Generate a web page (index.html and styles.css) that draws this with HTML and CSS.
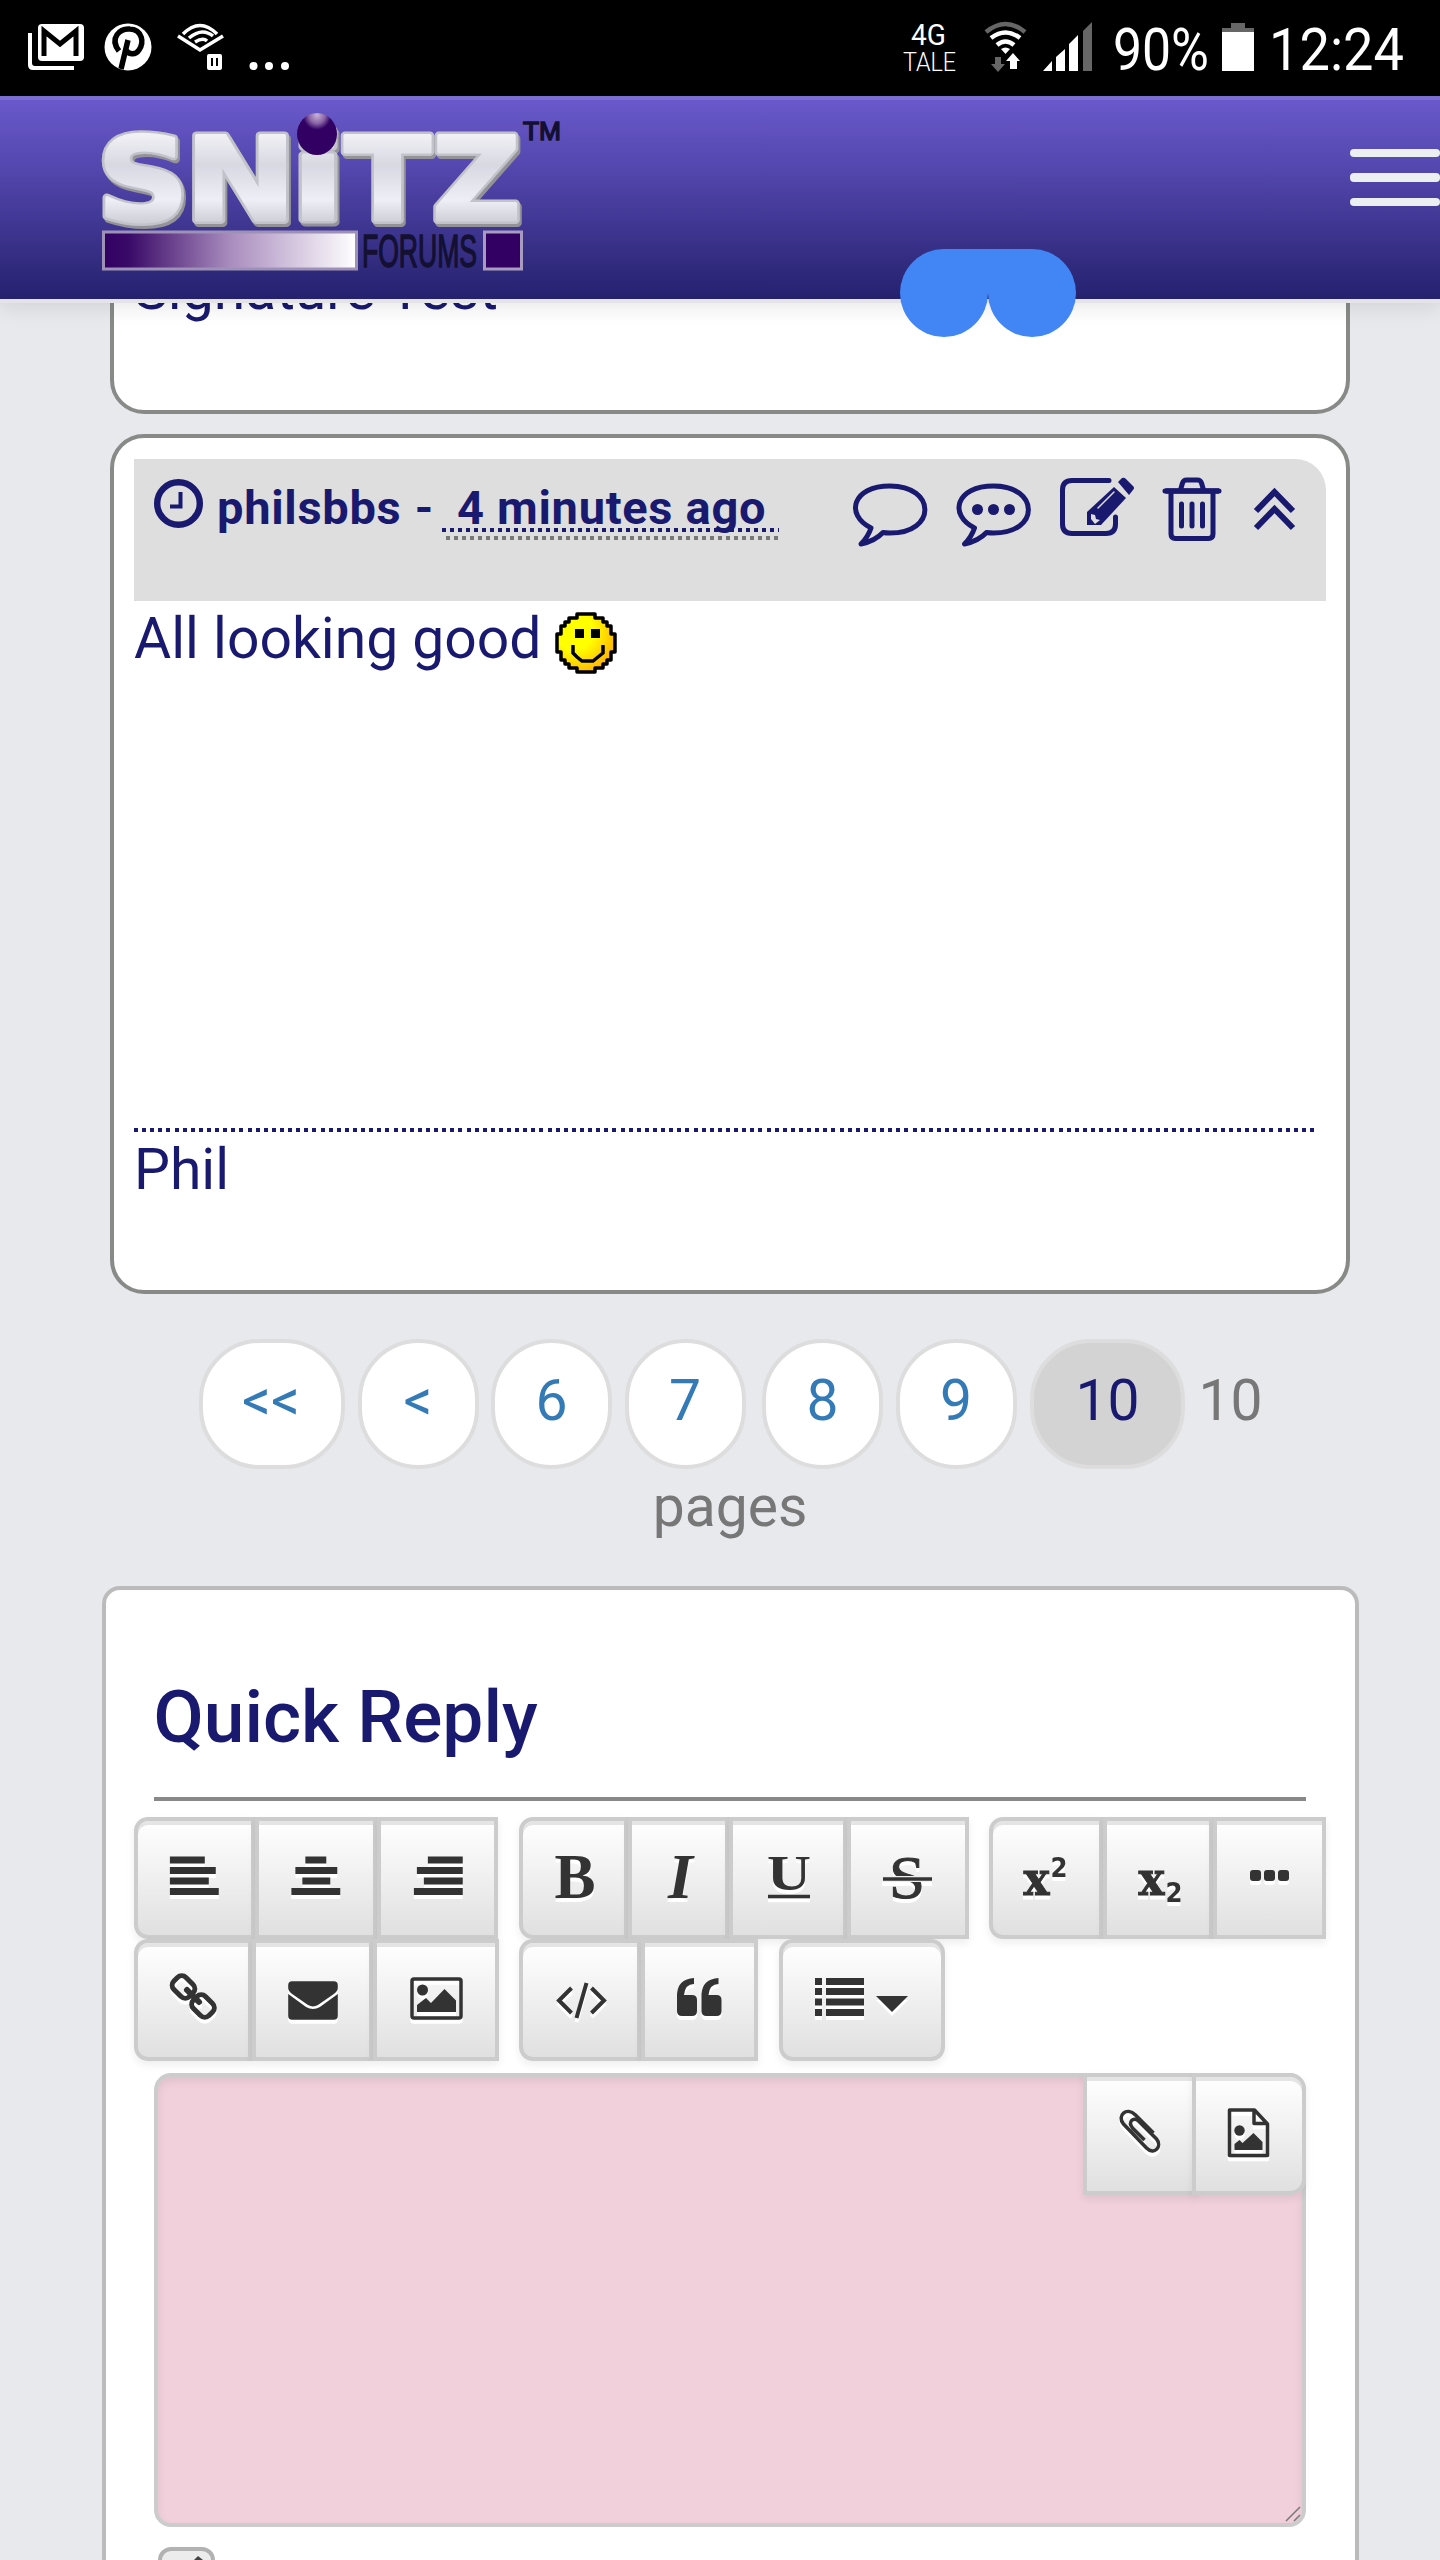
FILE: index.html
```html
<!DOCTYPE html>
<html lang="en">
<head>
<meta charset="utf-8">
<title>Snitz Forums</title>
<link rel="stylesheet" href="styles.css">
</head>
<body>
<div class="status">
  <svg width="1440" height="96" viewBox="0 0 1440 96">
    <g fill="#fff">
      <path d="M28 33h4v30q0 3 3 3h39v4H33q-5 0-5-5z"/>
      <rect x="38" y="24" width="46" height="37" rx="4"/>
      <path d="M44 56V31l16 13 16-13v25" fill="none" stroke="#000" stroke-width="5"/>
      <circle cx="128" cy="47" r="23.500"/>
      <path d="M121 69l7-29M119 51c-10-13 1-23 11-22 13 1 14 14 9 21-4 6-11 4-13 0" fill="none" stroke="#000" stroke-width="5.500"/>
      <g fill="none" stroke="#fff" stroke-width="3.500"><path d="M178 36l22 14 23-14M183 34q17-17 34 0M189 38q13-11 24-2M195 42q8-5 12-1"/></g>
      <rect x="207" y="54" width="15" height="16" rx="2"/>
      <path d="M212 58v8M217 58v8" stroke="#000" stroke-width="2"/>
      <circle cx="253.500" cy="66" r="4"/><circle cx="269" cy="66" r="4"/><circle cx="285" cy="66" r="4"/>
      <text x="911" y="44.500" font-size="29" textLength="35" lengthAdjust="spacingAndGlyphs">4G</text>
      <text x="903" y="71" font-size="26" font-weight="300" textLength="53" lengthAdjust="spacingAndGlyphs">TALE</text>
      <g fill="none" stroke="#fff" stroke-width="4.500">
        <path d="M986 32q19.500-16 39 0" stroke="#666"/>
        <path d="M991 38q14.500-11 29 0M997 45q8.500-7 17 0"/>
      </g>
      <path d="M1001 49q4.500-3 9 0l-4.500 5z"/>
      <path d="M995 57h6v7h4l-7 8-7-8h4z" fill="#666"/>
      <path d="M1010 69h7v-8h3l-7-8-7 8h4z"/>
      <path d="M1043 71l9-10v10zM1056 57l9-8v22h-9zM1069 44l9-9v36h-9z"/>
      <path d="M1083 31l9-9v49h-9z" fill="#666"/>
      <text x="1113" y="69.500" font-size="60" textLength="96" lengthAdjust="spacingAndGlyphs">90%</text>
      <path d="M1231 23h14v5h9v5h-32v-5h9z" fill="#666"/>
      <rect x="1222" y="32" width="32" height="39"/>
      <text x="1269" y="69.500" font-size="60" textLength="135" lengthAdjust="spacingAndGlyphs">12:24</text>
    </g>
  </svg>
</div>
<header class="navbar">
  <svg class="logo" width="470" height="176" viewBox="96 104 470 176">
    <defs>
      <linearGradient id="metal" x1="0" y1="130" x2="0" y2="230" gradientUnits="userSpaceOnUse"><stop offset="0" stop-color="#f4f4f8"/><stop offset=".35" stop-color="#d8d8e2"/><stop offset=".7" stop-color="#eeeef6"/><stop offset="1" stop-color="#c4c4cc"/></linearGradient>
      <linearGradient id="fade"><stop offset="0" stop-color="#310062"/><stop offset=".1" stop-color="#3a0a68"/><stop offset=".5" stop-color="#a98cbe"/><stop offset="1" stop-color="#fff"/></linearGradient>
      <radialGradient id="ball" cx=".5" cy=".05" r=".5"><stop offset="0" stop-color="#c9b2d6"/><stop offset=".4" stop-color="#8a64a6"/><stop offset=".7" stop-color="#310062"/></radialGradient>
      <g id="word" class="logo-word">
        <text x="98" y="220" font-size="115" textLength="92" lengthAdjust="spacingAndGlyphs">S</text>
        <text x="185.500" y="220" font-size="115" textLength="112" lengthAdjust="spacingAndGlyphs">N</text>
        <text x="291.500" y="220" font-size="117" textLength="55" lengthAdjust="spacingAndGlyphs">i</text>
        <text x="345.500" y="220" font-size="115" textLength="86" lengthAdjust="spacingAndGlyphs">T</text>
        <text x="433" y="220" font-size="115" textLength="89" lengthAdjust="spacingAndGlyphs">Z</text>
      </g>
    </defs>
    <use href="#word" x="1" y="3" fill="#939397" stroke="#939397" stroke-width="8"/>
    <use href="#word" x="-1" y="0" fill="#bcbcc6" stroke="#c2c2ca" stroke-width="8"/>
    <use href="#word" x="-1" y="0" fill="url(#metal)" stroke="url(#metal)" stroke-width="3"/>
    <ellipse cx="317" cy="134" rx="20" ry="21" fill="url(#ball)"/>
    <text x="523" y="140" class="logo-small" font-size="26" textLength="38" lengthAdjust="spacingAndGlyphs">TM</text>
    <rect x="103.500" y="232" width="253" height="37" fill="url(#fade)" stroke="#9d92b5" stroke-width="3"/>
    <text x="362" y="267" class="logo-small" font-size="46" textLength="115" lengthAdjust="spacingAndGlyphs">FORUMS</text>
    <rect x="484.500" y="232" width="37" height="37" fill="#310062" stroke="#a79cc0" stroke-width="3"/>
  </svg>
  <div class="burger"><i></i><i></i><i></i></div>
  <div class="handles"><i></i><i></i></div>
</header>
<main class="page">
  <section class="card card-prev"><div class="sig-prev">Signature Test</div></section>
  <section class="card card-post">
    <div class="post-head">
      <svg width="49" height="49" viewBox="0 0 49 49"><circle cx="24.500" cy="24.500" r="21.300" fill="none" stroke="#191970" stroke-width="6.400"/><path d="M26.500 13v14.500H16" fill="none" stroke="#191970" stroke-width="4"/></svg>
      <span class="author">philsbbs -</span>
      <span class="ago">4 minutes ago</span>
      <svg class="actions" width="452" height="80" viewBox="848 469 452 80" fill="none" stroke="#191970" stroke-width="5" stroke-linejoin="round" stroke-linecap="round">
        <path id="bubble" d="M871 528C845 515 852 486 890 486C936 486 937 533 890 533Q886 533 883 532.500Q875 541 861 544Q868 537 871 528z"/>
        <use href="#bubble" x="103.500"/>
        <g fill="#191970" stroke="none"><circle cx="977.500" cy="509.500" r="5.500"/><circle cx="993.500" cy="509.500" r="5.500"/><circle cx="1009.500" cy="509.500" r="5.500"/></g>
        <path d="M1109 480.500h-37q-9.500 0-9.500 9.500v34q0 9.500 9.500 9.500h34q9.500 0 9.500-9.500v-7"/>
        <path d="M1114 487l12 11-25 27h-14v-13z" fill="#191970" stroke="none"/>
        <path d="M1118 482l4-4q2-1 4 1l7 7q2 2 0 4l-4 5z" fill="#191970" stroke="none"/>
        <path d="M1098 508l16-16" stroke="#dedede" stroke-width="1.500"/>
        <path d="M1091 514l4 1 1 4 4 1-5 4-4-5z" fill="#dedede" stroke="none"/>
        <path d="M1165.500 491h53.500" stroke-width="5.500" stroke-linecap="butt"/>
        <path d="M1165 491h54M1171 491v43q0 4.500 4.500 4.500h33q4.500 0 4.500-4.500v-43M1180.500 490l2-7q1-3 4-3h11q3 0 4 3l2 7"/>
        <path d="M1181.500 504v22M1192 504v22M1202.500 504v22"/>
        <path d="M1256 511l18.500-19L1293 511M1256 528l18.500-19L1293 528" stroke-linecap="butt" stroke-linejoin="miter" stroke-width="6"/>
      </svg>
    </div>
    <div class="post-body">All looking good <svg class="smiley" width="62" height="62" viewBox="0 0 62 62"><defs><radialGradient id="sun" cx=".3" cy=".3" r=".8"><stop offset=".4" stop-color="#ff0"/><stop offset="1" stop-color="#ffae00"/></radialGradient></defs><path d="M22 2h18v4h8v4h4v4h4v8h4v18h-4v8h-4v4h-4v4h-8v4H22v-4h-8v-4h-4v-4H6v-8H2V22h4v-8h4v-4h4V6h8z" fill="url(#sun)" stroke="#000" stroke-width="3.500" stroke-linejoin="round"/><path d="M20 17h9v9h-9zM36 17h9v9h-9z"/><path d="M18 33v8l4 4 5 4h11l5-4 5-4v-8" fill="none" stroke="#000" stroke-width="3.500"/></svg></div>
    <div class="dots"></div>
    <div class="post-sig">Phil</div>
  </section>
  <nav class="pager">
    <a class="wide">&lt;&lt;</a><a>&lt;</a><a>6</a><a>7</a><a class="eight">8</a><a>9</a><a class="current">10</a><span>10</span>
  </nav>
  <div class="pages">pages</div>
  <section class="panel">
    <h2>Quick Reply</h2>
    <div class="rule"></div>
    <div class="toolbar">
      <div class="group g365">
        <button><svg viewBox="134 1817 122 122"><g class="bars"><path d="M170 1860h35M170 1870.500h46M170 1881h39M170 1891.500h49"/></g></svg></button>
        <button><svg viewBox="255.500 1817 122 122"><g class="bars"><path d="M306 1860h21M296 1870.500h42M303 1881h28M292 1891.500h49"/></g></svg></button>
        <button><svg viewBox="377 1817 122 122"><g class="bars"><path d="M428 1860h35M417 1870.500h46M424 1881h39M414 1891.500h49"/></g></svg></button>
      </div>
      <div class="group g449">
        <button class="w109"><svg viewBox="519.500 1817 109 122"><text class="serif" x="555" y="1898" font-size="64" font-weight="700" textLength="41" lengthAdjust="spacingAndGlyphs">B</text></svg></button>
        <button class="w101"><svg viewBox="628 1817 101 122"><text class="serif" x="668" y="1898" font-size="64" font-weight="700" font-style="italic">I</text></svg></button>
        <button class="w118"><svg viewBox="729 1817 118 122"><text class="serif" x="767" y="1890" font-size="51" font-weight="700" textLength="44" lengthAdjust="spacingAndGlyphs">U</text><path class="line" d="M768 1896.500h42"/></svg></button>
        <button class="w122"><svg viewBox="847 1817 122 122"><text class="serif strike" x="889" y="1898" font-size="62" textLength="36" lengthAdjust="spacingAndGlyphs">S</text><path d="M882 1876h50v6h-50z" fill="#eee"/><path class="line" d="M883 1879h49"/></svg></button>
      </div>
      <div class="group g337">
        <button class="w114"><svg viewBox="989.500 1817 114 122"><text class="slab" x="1024" y="1895" font-size="47" textLength="26" lengthAdjust="spacingAndGlyphs">x</text><text class="bold" x="1051" y="1877" font-size="27" textLength="17" lengthAdjust="spacingAndGlyphs">2</text></svg></button>
        <button class="w110"><svg viewBox="1103.500 1817 110 122"><text class="slab" x="1139" y="1895" font-size="47" textLength="26" lengthAdjust="spacingAndGlyphs">x</text><text class="bold" x="1166" y="1902" font-size="27" textLength="17" lengthAdjust="spacingAndGlyphs">2</text></svg></button>
        <button class="w113"><svg viewBox="1213 1817 113 122"><rect x="1250" y="1870" width="11" height="11" rx="3"/><rect x="1264" y="1870" width="11" height="11" rx="3"/><rect x="1278" y="1870" width="11" height="11" rx="3"/></svg></button>
      </div>
      <div class="group g365">
        <button class="w118"><svg viewBox="134 1939 118 122"><g fill="none" stroke="#333" stroke-width="5"><rect x="-11" y="-8.500" width="22" height="17" rx="6" transform="translate(183.500 1987) rotate(45)"/><rect x="-11" y="-8.500" width="22" height="17" rx="6" transform="translate(203 2006) rotate(45)"/><path d="M187 1990l12 12" stroke-linecap="round" stroke-width="6"/></g></svg></button>
        <button class="w121"><svg viewBox="251.500 1939 122 122"><path d="M288 1985q0-4 4-4h42q4 0 4 4v3q0 3-4 6l-16 11q-5 3-10 0l-16-11q-4-3-4-6z"/><path d="M288 1994l18 13q7 4 14 0l18-13v22q0 4-4 4h-42q-4 0-4-4z"/></svg></button>
        <button class="w126"><svg viewBox="373 1939 126 122"><rect x="412" y="1979" width="49" height="39" rx="2" fill="none" stroke="#333" stroke-width="3.500"/><circle cx="422.500" cy="1990" r="5.500"/><path d="M417 2012v-7l9-7 5 5 13.500-14 11.500 11.500v11.500z"/></svg></button>
      </div>
      <div class="group g239">
        <button class="w122"><svg viewBox="519.500 1939 122 122"><path d="M572 1988l-12.500 12.500 12.500 12.500M592 1988l12.500 12.500L592 2013M587 1983l-10 35" fill="none" stroke="#333" stroke-width="4"/></svg></button>
        <button class="w117"><svg viewBox="641 1939 117 122"><path id="quote" d="M694 1978v6q-9 0-10 11h8q5 0 5 5v11q0 5-5 5h-10q-5 0-5-5v-17q1-15 17-16z"/><use href="#quote" x="24.500"/></svg></button>
      </div>
      <div class="group g166">
        <button class="w166"><svg viewBox="779 1939 166 122"><path d="M815 1981.500h7M815 1991.500h7M815 2002h7M815 2012.500h7M826 1981.500h38M826 1991.500h38M826 2002h38M826 2012.500h38" stroke="#333" stroke-width="7"/><path d="M876 1996h32l-16 16z" class="caret"/></svg></button>
      </div>
    </div>
    <div class="editor">
      <div class="attach">
        <button class="w113"><svg viewBox="1083 2073 113 122"><path d="M1153.500 2133l-18-18c-9-9-19 1-12 9l23 24c8 8 16-2 10-9l-18-18c-5-5-11 1-6 7l12 12" fill="none" stroke="#333" stroke-width="3.500"/></svg></button>
        <button class="w114"><svg viewBox="1193 2073 113 122"><path d="M1230 2110h25l13 14v31.500h-38zM1254.500 2110v13.500h13.500" fill="none" stroke="#333" stroke-width="3.500" stroke-linejoin="round"/><circle cx="1240" cy="2130.500" r="5.200"/><path d="M1235 2150v-6l5-4 3 3 11-10 9 9v8z"/></svg></button>
      </div>
      <svg class="grip" width="16" height="16" viewBox="0 0 16 16"><path d="M1 15L15 1M9 15l6-6" stroke="#777" stroke-width="1.500"/></svg>
    </div>
    <div class="checkbox"><svg width="49" height="20" viewBox="0 0 49 20"><path d="M26 15l10-10 5 4-10 9z" fill="#444"/></svg></div>
  </section>
</main>
</body>
</html>
```

FILE: styles.css
```css
* { box-sizing: border-box; }
body { margin: 0; width: 1440px; height: 2560px; overflow: hidden; background: #e8e9ed; color: #191970; font-family: Roboto, sans-serif; font-size: 57px; }
svg { display: block; flex: none; }
.status { height: 96px; background: #000; }
.navbar { position: relative; z-index: 2; height: 207px; border-bottom: 4px solid #e4e4e6; background: linear-gradient(#6a5acd, #5447ae 35%, #25216e); background-clip: padding-box; box-shadow: inset 0 4px 0 #7b6dd2, 0 4px 20px rgba(0,0,0,.1); display: flex; justify-content: space-between; padding: 8px 0 0 96px; }
.logo-word { font-family: "DejaVu Sans", sans-serif; font-weight: 700; stroke-linejoin: round; }
.logo-small { fill: #131032; font-family: "Liberation Sans", sans-serif; stroke: #131032; stroke-width: 1.500px; }
.burger { display: flex; flex-direction: column; gap: 16px; width: 90px; padding-top: 44.500px; }
.burger i { height: 8.500px; border-radius: 4px; background: #eceff1; }
.handles { position: absolute; left: 900px; top: 153px; display: flex; }
.handles i { width: 88px; height: 88px; background: #4285f4; border-radius: 44px 0 44px 44px; }
.handles i + i { border-radius: 0 44px 44px 44px; }
.page { height: 2257px; overflow: hidden; }
.card { width: 1240px; margin-left: 110px; border: 4px solid #888a88; border-radius: 34px; background: #fff; }
.card-prev { height: 154px; margin-top: -43px; padding: 10px 20px; }
.sig-prev { line-height: 76px; margin-top: -22px; }
.card-post { height: 860px; margin-top: 20px; padding: 21px 20px 0; }
.post-head { height: 142px; background: #dedede; border-top-right-radius: 31px; display: flex; align-items: flex-start; padding: 10px 26px 0 20px; font-weight: 700; font-size: 47px; line-height: 78px; letter-spacing: .7px; }
.post-head > svg:first-child { margin-top: 10px; }
.author { width: 212px; margin-left: 14px; white-space: nowrap; word-spacing: 1px; }
.ago { width: 337px; height: 71px; margin-left: 13px; padding-left: 15px; white-space: nowrap; background: repeating-linear-gradient(90deg, #191970 0 4px, transparent 4px 8px) 0 59px / 100% 4px no-repeat, repeating-linear-gradient(90deg, #777 0 4px, transparent 4px 8px) 4px 67px / 100% 4px no-repeat; }
.actions { margin-left: auto; }
.post-body { height: 527px; line-height: 76px; }
.smiley { display: inline-block; vertical-align: -16px; margin-left: -1px; }
.dots { width: 1180px; height: 4px; background: repeating-linear-gradient(90deg, #191970 0 4px, transparent 4px 8.110px); }
.post-sig { line-height: 76px; }
.pager { display: flex; margin-top: 45px; padding-left: 199px; gap: 12.500px; line-height: 116px; color: #777; }
.pager a { width: 121px; height: 130px; border: 4px solid #ddd; border-radius: 61px; background: #fff; color: #337ab7; text-align: center; }
.pager .wide { width: 146px; padding-right: 2px; }
.pager .eight { margin-left: 4px; }
.pager .current { width: 155px; margin-left: 1px; background: #d3d3d3; color: #191970; }
.pager span { line-height: 124px; margin-left: 1px; }
.pages { line-height: 75px; height: 74px; text-align: center; margin-left: 20px; color: #777; }
.panel { width: 1257px; height: 1100px; margin: 43px 0 0 101.500px; border: 4px solid #bbb; border-radius: 18px; background: #fff; padding: 87px 28px 0; }
h2 { margin: 0 0 40px 20px; font-size: 73px; line-height: 80px; font-weight: 500; }
.rule { width: 1152px; height: 4px; margin: 0 0 16px 20.500px; background: #888; }
.toolbar { display: flex; flex-wrap: wrap; column-gap: 20.500px; margin-right: -4px; }
.group { display: flex; }
.g365 { width: 365px; } .g449 { width: 449.500px; } .g337 { width: 336.500px; } .g239 { width: 239px; }
button { flex: none; width: 121.660px; height: 122px; padding: 0; margin: 0; border: 4px solid #ccc; background: linear-gradient(#fff, #e0e0e0); box-shadow: inset 0 4px 0 rgba(0,0,0,.1), 0 4px 8px rgba(0,0,0,.07); display: flex; }
button svg { width: calc(100% + 8px); height: 122px; margin: -4px; fill: #333; filter: drop-shadow(0 4px 0 #fff); }
.group button:first-child { border-radius: 14px 0 0 14px; }
.group .w166 { border-radius: 14px !important; }
.bars { stroke: #333; stroke-width: 7px; }
.line { stroke: #333; stroke-width: 3.500px; }
.serif { font-family: "Liberation Serif", serif; }
.strike { stroke: #333; stroke-width: 1px; }
.slab { font-family: "DejaVu Serif", serif; font-weight: 700; stroke: #333; stroke-width: 1px; }
.bold { font-family: "DejaVu Sans", sans-serif; font-weight: 700; }
.caret { stroke: none; }
.w101 { width: 101px; } .w109 { width: 109px; } .w110 { width: 110px; } .w113 { width: 113px; } .w114 { width: 114px; }
.w117 { width: 117px; } .w118 { width: 118px; } .w121 { width: 121px; } .w122 { width: 122px; } .w126 { width: 126px; } .w166 { width: 166px; }
.editor { position: relative; width: 1152px; height: 454px; margin: 12px 0 20px 20.500px; border: 4px solid #ccc; border-radius: 17px; background: #f1d0db; box-shadow: inset 0 4px 8px rgba(0,0,0,.08); }
.attach { position: absolute; right: -4px; top: -4px; display: flex; }
.attach button + button { margin-left: -4px; border-radius: 0 16px 16px 0; }
.grip { position: absolute; right: 1px; bottom: 1px; }
.checkbox { width: 57px; height: 57px; margin-left: 24px; border: 4px solid #b2b2b2; border-radius: 13px; background: #ececec; }
```
